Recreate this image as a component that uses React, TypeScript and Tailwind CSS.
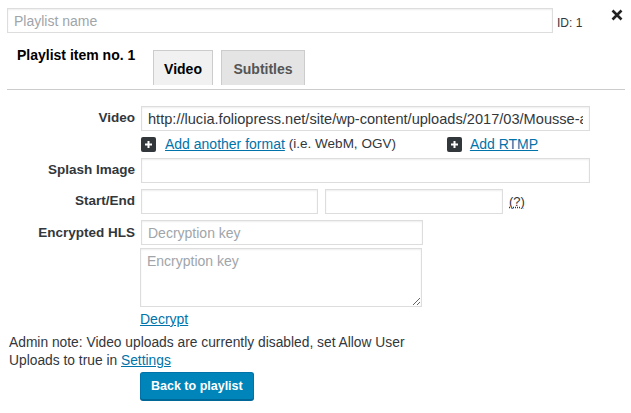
const inputBase =
  "h-[25px] border border-[#ddd] bg-white px-[6px] text-[#32373c] shadow-[inset_0_1px_2px_rgba(0,0,0,0.07)] outline-none placeholder:text-[#a0a5aa]";
const inputCls = `${inputBase} text-[14px]`;

const PlusBox = () => (
  <span className="flex h-[15px] w-[15px] items-center justify-center rounded-[2px] bg-[#32373c]">
    <svg width="9" height="9" viewBox="0 0 9 9">
      <path d="M4.5 1v7M1 4.5h7" stroke="#fff" strokeWidth="2" />
    </svg>
  </span>
);

const Label = ({ children, top }: { children: string; top?: boolean }) => (
  <div
    className={`w-[141px] shrink-0 pr-[6px] text-right text-[13.5px] font-bold text-[#32373c] ${
      top ? "self-start pt-[3px]" : ""
    }`}
  >
    {children}
  </div>
);

const App = () => {
  return (
    <div className="h-[413px] w-[631px] bg-white font-['Liberation_Sans',Arial,sans-serif] text-[#32373c]">
      {/* top bar */}
      <div className="flex items-center pl-[7px] pt-[8px]">
        <input className={`${inputCls} h-[24px] w-[546px]`} placeholder="Playlist name" />
        <span className="ml-[4px] mt-[5px] text-[12px]">ID: 1</span>
        <svg className="ml-[29px] -mt-[12px]" width="12" height="12" viewBox="0 0 12 12">
          <path d="M1.5 1.5l9 9M10.5 1.5l-9 9" stroke="#222" strokeWidth="2.6" />
        </svg>
      </div>

      {/* tabs */}
      <div className="mx-[7px] mt-[17px] w-[618px] border-b border-[#ccc] pb-[4px]">
        <div className="flex items-start">
          <div className="-mt-[5px] w-[146px] pl-[10px] text-[14px] font-bold text-black">Playlist item no. 1</div>
          <div className="flex gap-[8px]">
            <div className="flex h-[35px] w-[60px] items-center justify-center border border-b-0 border-[#ccc] bg-[#f1f1f1] pt-[3px] text-[14px] font-bold text-black">
              Video
            </div>
            <div className="flex h-[35px] w-[84px] items-center justify-center border border-b-0 border-[#ccc] bg-[#e4e4e4] pt-[3px] text-[14px] font-bold text-[#555]">
              Subtitles
            </div>
          </div>
        </div>
      </div>

      {/* form */}
      <div className="mt-[16px] flex flex-col">
        <div className="flex items-center">
          <Label>Video</Label>
          <input
            className={`${inputBase} w-[449px] text-[14.6px]`}
            readOnly
            value="http://lucia.foliopress.net/site/wp-content/uploads/2017/03/Mousse-au-chocolat.mp4"
          />
        </div>

        <div className="mt-[6px] flex h-[15px] items-center pl-[141px] text-[14px]">
          <PlusBox />
          <a href="#" className="ml-[9px] text-[#0073aa] underline">Add another format</a>
          <span className="ml-[4px] text-[13.5px]">(i.e. WebM, OGV)</span>
          <span className="ml-[51px]"><PlusBox /></span>
          <a href="#" className="ml-[8px] text-[#0073aa] underline">Add RTMP</a>
        </div>

        <div className="mt-[6px] flex items-center">
          <Label>Splash Image</Label>
          <input className={`${inputCls} w-[449px]`} />
        </div>

        <div className="mt-[6px] flex items-center">
          <Label>Start/End</Label>
          <input className={`${inputCls} w-[177px]`} />
          <input className={`${inputCls} ml-[7px] w-[178px]`} />
          <abbr className="ml-[6px] text-[13px] underline decoration-dotted">(?)</abbr>
        </div>

        <div className="mt-[6px] flex">
          <Label top>Encrypted HLS</Label>
          <div className="flex flex-col">
            <input className={`${inputCls} h-[24px] w-[282px]`} placeholder="Decryption key" />
            <textarea
              className="-ml-px mt-[3px] h-[59px] w-[282px] border border-[#ddd] px-[6px] py-[2px] text-[14px] shadow-[inset_0_1px_2px_rgba(0,0,0,0.07)] outline-none placeholder:text-[#a0a5aa]"
              placeholder="Encryption key"
            />
            <a href="#" className="-ml-px mt-[3px] text-[14px] leading-[18px] text-[#0073aa] underline">Decrypt</a>
          </div>
        </div>

        <p className="mt-[6px] pl-[9px] text-[13.8px] leading-[18px]">
          Admin note: Video uploads are currently disabled, set Allow User
          <br />
          Uploads to true in <a href="#" className="text-[#0073aa] underline">Settings</a>
        </p>

        <div className="mt-[2px] pl-[140px]">
          <button className="h-[28px] rounded-[3px] border border-[#0073aa] border-b-[#006799] bg-[#0085ba] px-[10px] text-[12.5px] font-bold text-white shadow-[0_1px_0_#006799]">
            Back to playlist
          </button>
        </div>
      </div>
    </div>
  );
};

export default App;
